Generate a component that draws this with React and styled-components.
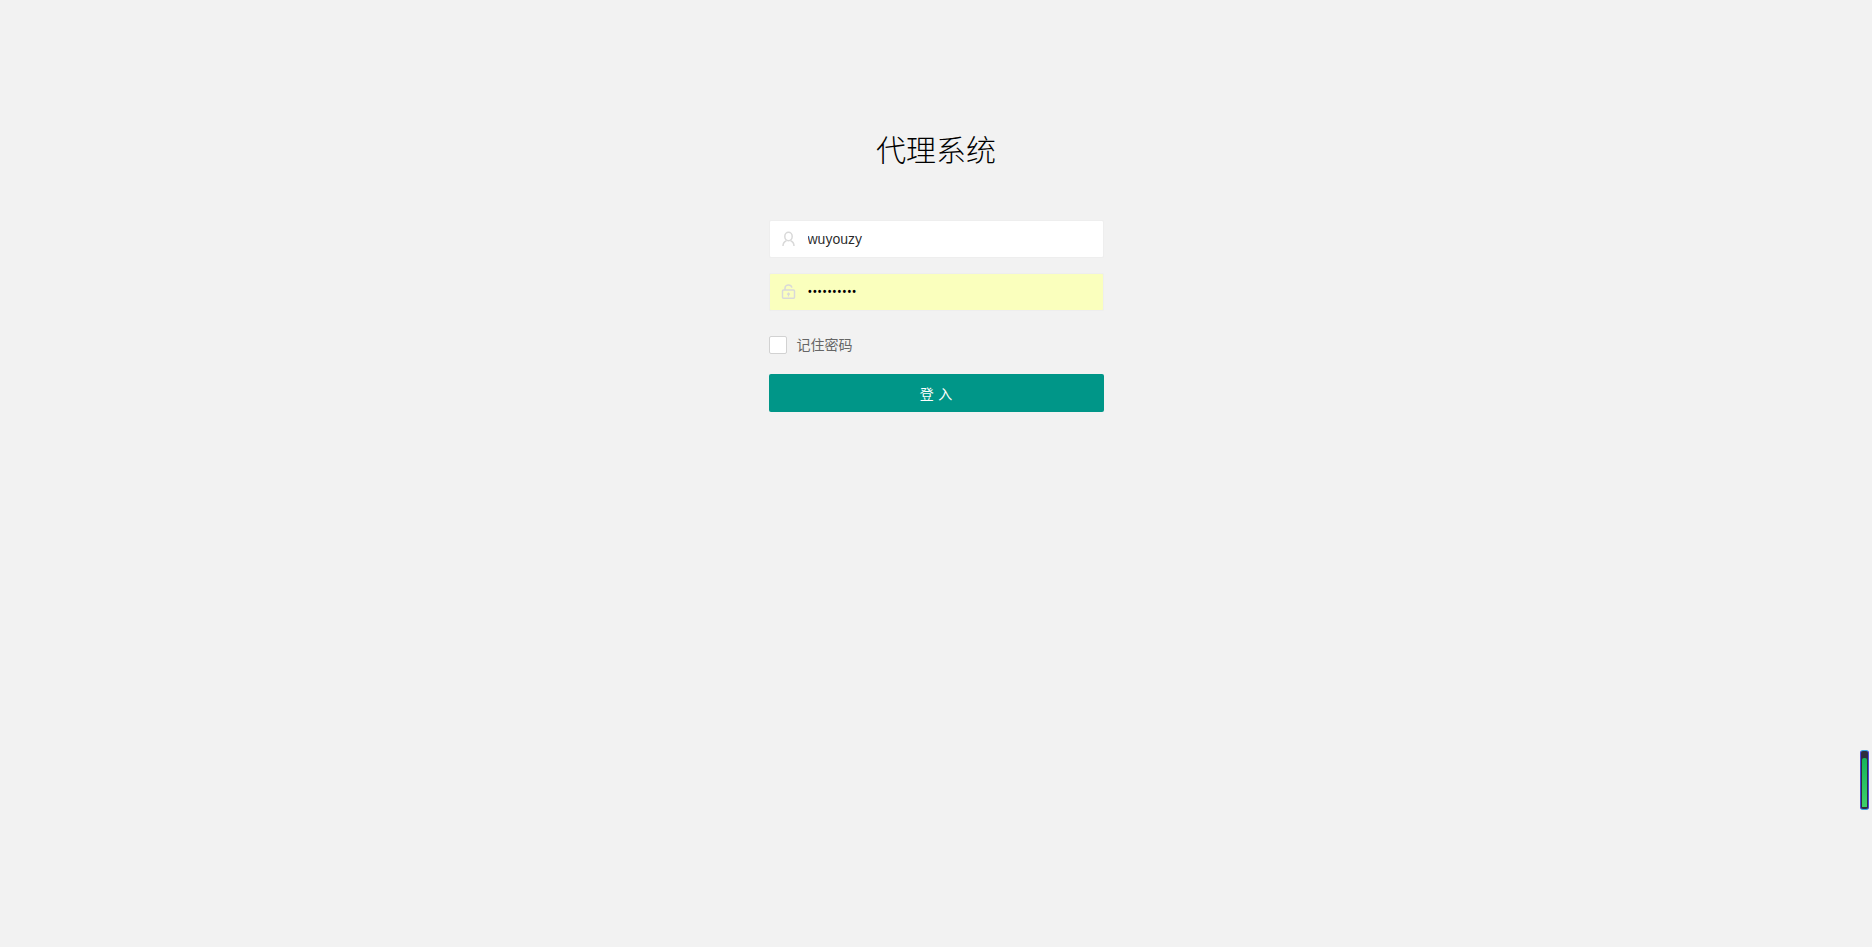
import React from 'react';
import styled, { createGlobalStyle } from 'styled-components';

const Global = createGlobalStyle`
  html, body { margin: 0; padding: 0; background: #f2f2f2; }
  body { font: 14px/24px "Liberation Sans", Roboto, "Noto Sans CJK SC", sans-serif; color: #666; }
`;

const Page = styled.main`
  min-height: 100vh;
  box-sizing: border-box;
  display: flex;
  flex-direction: column;
  align-items: center;
  padding-top: 128px;
  overflow: hidden;
`;

const Title = styled.h2`
  margin: 0 0 52px;
  height: 40px;
  font: 200 30px/40px "Noto Sans CJK SC", sans-serif;
  color: #000;
  text-align: center;
`;

const Form = styled.form`
  width: 335px;
  display: flex;
  flex-direction: column;
`;

const Field = styled.div`
  position: relative;
  height: 38px;
  margin-bottom: ${p => p.$gap}px;
`;

const IconSlot = styled.span`
  position: absolute;
  left: 12px;
  top: 11px;
  width: 16px;
  height: 16px;
  display: flex;
  color: #d9d9d9;
`;

const Input = styled.input`
  box-sizing: border-box;
  display: block;
  width: 100%;
  height: 38px;
  padding: 0 10px 0 38px;
  border: 1px solid #eeeeee;
  border-radius: 2px;
  outline: none;
  background: ${p => p.$autofill ? '#faffbd' : '#fff'};
  color: ${p => p.$autofill ? '#000' : 'rgba(0,0,0,.85)'};
  font: 14px ${p => p.$autofill ? 'Roboto' : '"Liberation Sans"'}, sans-serif;
  letter-spacing: ${p => p.$autofill ? '0.2px' : '0'};
`;

const RememberRow = styled.label`
  display: flex;
  align-items: center;
  height: 18px;
  margin-bottom: 20px;
  line-height: 18px;
`;

const CheckBox = styled.span`
  box-sizing: border-box;
  width: 18px;
  height: 18px;
  border: 1px solid #d2d2d2;
  border-radius: 2px;
  background: #fff;
  margin-right: 10px;
`;

const RememberText = styled.span`
  font: 14px/16px "Noto Sans CJK SC", sans-serif;
  color: #666;
  margin-top: -2px;
`;

const Submit = styled.button`
  height: 38px;
  width: 100%;
  padding: 0;
  border: 0;
  border-radius: 2px;
  background: #009688;
  color: #fff;
  font: 14px/38px "Noto Sans CJK SC", sans-serif;
  word-spacing: 1.5px;
`;

const Meter = styled.div`
  position: fixed;
  left: 1860px;
  top: 750px;
  width: 9px;
  height: 60px;
  box-sizing: border-box;
  border: 1px solid #4a46dc;
  border-top-color: #33a4e8;
  border-bottom-color: #33a4e8;
  border-radius: 3px;
  background: #2d2d3f;
  padding: 7px 1px 2px;
  display: flex;
`;

const MeterFill = styled.div`
  flex: 1;
  border-radius: 2px 2px 0 0;
  background: linear-gradient(#16b45c, #3fcf68);
`;

const UserIcon = () => (
  <svg width="16" height="16" viewBox="0 0 16 16" fill="none" stroke="currentColor" strokeWidth="1.5">
    <ellipse cx="7.500" cy="5.500" rx="3.700" ry="4.200" />
    <path d="M2 15c0-2.600 1.400-4.400 3.400-5.200M13 15c0-2.600-1.400-4.400-3.400-5.200" />
  </svg>
);

const LockIcon = () => (
  <svg width="16" height="16" viewBox="0 0 16 16" fill="none" stroke="currentColor" strokeWidth="1.5">
    <rect x="1.500" y="6" width="12" height="8.300" rx="1" />
    <path d="M4 6V4.200C4 2.400 5.600 1 7.500 1s3 1 3.400 2.600" />
    <path d="M7.500 12.500V9.500M6.200 10.500l1.300-1.300 1.300 1.300" strokeWidth="1.200" />
  </svg>
);

export default function App() {
  return (
    <>
      <Global />
      <Page>
        <Title>代理系统</Title>
        <Form>
          <Field $gap={15}>
            <IconSlot><UserIcon /></IconSlot>
            <Input type="text" defaultValue="wuyouzy" readOnly />
          </Field>
          <Field $gap={25}>
            <IconSlot><LockIcon /></IconSlot>
            <Input $autofill type="password" defaultValue="wuyouzy123" readOnly />
          </Field>
          <RememberRow>
            <CheckBox />
            <RememberText>记住密码</RememberText>
          </RememberRow>
          <Submit type="button">登 入</Submit>
        </Form>
      </Page>
      <Meter><MeterFill /></Meter>
    </>
  );
}
